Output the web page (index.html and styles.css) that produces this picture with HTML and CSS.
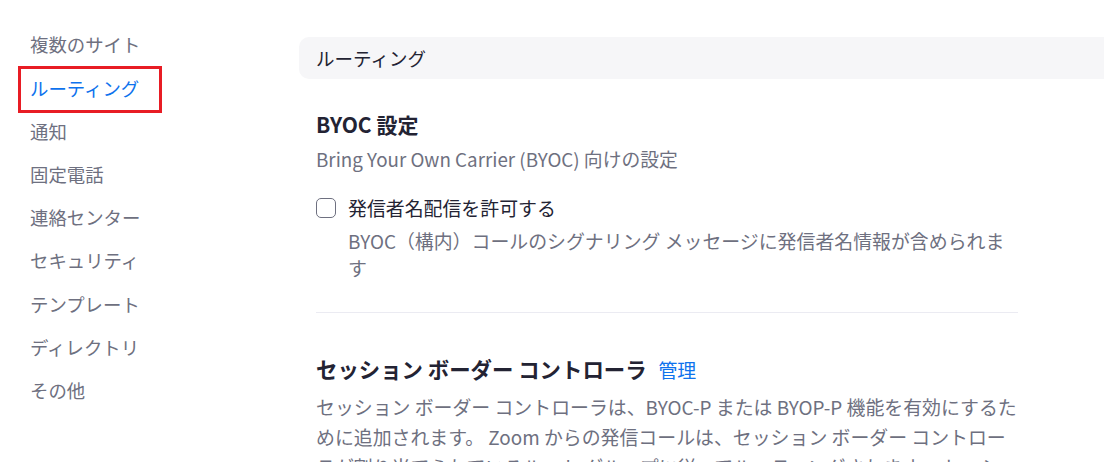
FILE: index.html
```html
<!DOCTYPE html>
<html lang="ja">
<head>
    <meta charset="UTF-8">
    <meta name="viewport" content="width=device-width, initial-scale=1.0">
    <title>ルーティング</title>
    <link rel="stylesheet" href="styles.css">
</head>
<body>
<div class="page">
    <nav class="side-nav">
        <a class="nav-item" href="#">複数のサイト</a>
        <a class="nav-item active" href="#"><span class="mark">ルーティング</span></a>
        <a class="nav-item" href="#">通知</a>
        <a class="nav-item" href="#">固定電話</a>
        <a class="nav-item" href="#">連絡センター</a>
        <a class="nav-item" href="#">セキュリティ</a>
        <a class="nav-item" href="#">テンプレート</a>
        <a class="nav-item" href="#">ディレクトリ</a>
        <a class="nav-item" href="#">その他</a>
    </nav>

    <main class="main">
        <div class="section-bar">ルーティング</div>

        <div class="content">
            <section class="setting">
                <h3 class="setting-title">BYOC 設定</h3>
                <p class="setting-sub">Bring Your Own Carrier (BYOC) 向けの設定</p>

                <label class="check-row">
                    <input type="checkbox" class="check">
                    <span>発信者名配信を許可する</span>
                </label>
                <p class="check-desc">BYOC（構内）コールのシグナリング メッセージに発信者名情報が含められます</p>
            </section>

            <hr class="divider">

            <section class="setting">
                <h3 class="setting-title long">セッション ボーダー コントローラ <a class="manage" href="#">管理</a></h3>
                <p class="setting-text">セッション ボーダー コントローラは、BYOC-P または BYOP-P 機能を有効にするために追加されます。 Zoom からの発信コールは、セッション ボーダー コントローラが割り当てられているルート グループに従ってルーティングされます。 セッション ボーダー コントローラを管理します。</p>
            </section>
        </div>
    </main>
</div>
</body>
</html>
```

FILE: styles.css
```css
body {
    margin: 0;
    font-family: "Noto Sans CJK JP", "Noto Sans", sans-serif;
    background-color: #fff;
    color: #232333;
    overflow: hidden;
}
.page {
    display: flex;
    height: 462px;
}
.side-nav {
    width: 299px;
    flex-shrink: 0;
    display: flex;
    flex-direction: column;
    padding-top: 23px;
    padding-left: 30px;
    box-sizing: border-box;
}
.nav-item {
    display: block;
    height: 43.3px;
    line-height: 43px;
    font-size: 18.4px;
    color: #6e7080;
    text-decoration: none;
}
.nav-item.active {
    color: #0e72ed;
}
.mark {
    display: inline-block;
    line-height: 27px;
    padding: 6px 20px 8px 9px;
    margin-left: -12px;
    border: 3px solid #e81c24;
}
.main {
    flex: 1;
    padding-top: 37px;
    margin-right: -20px;
}
.section-bar {
    height: 42px;
    line-height: 42px;
    padding-left: 17px;
    font-size: 18.5px;
    background-color: #f6f6f8;
    border-radius: 10px;
}
.content {
    width: 702px;
    padding-left: 17px;
    padding-top: 31px;
}
.setting-title {
    margin: 0;
    font-size: 21px;
    line-height: 28px;
    font-weight: bold;
}
.setting-title.long {
    font-size: 21.4px;
}
.setting-sub {
    margin: 8px 0 0;
    font-size: 18.8px;
    line-height: 26px;
    color: #6e7080;
}
.check-row {
    display: flex;
    align-items: center;
    gap: 12px;
    margin-top: 23px;
    font-size: 18.9px;
    line-height: 26px;
}
.check {
    appearance: none;
    width: 20px;
    height: 20px;
    margin: 0;
    border: 1px solid #6e7080;
    border-radius: 5px;
    background: #fff;
}
.check-desc {
    margin: 6px 0 0 32px;
    font-size: 18.9px;
    line-height: 27px;
    color: #6e7080;
}
.divider {
    border: 0;
    border-top: 1px solid #ebebf2;
    margin: 31px 0 42px;
}
.manage {
    margin-left: 7px;
    font-size: 18.9px;
    font-weight: normal;
    color: #0e72ed;
    text-decoration: none;
}
.setting-text {
    margin: 8px 0 0;
    font-size: 18.9px;
    line-height: 30px;
    color: #6e7080;
}
```
